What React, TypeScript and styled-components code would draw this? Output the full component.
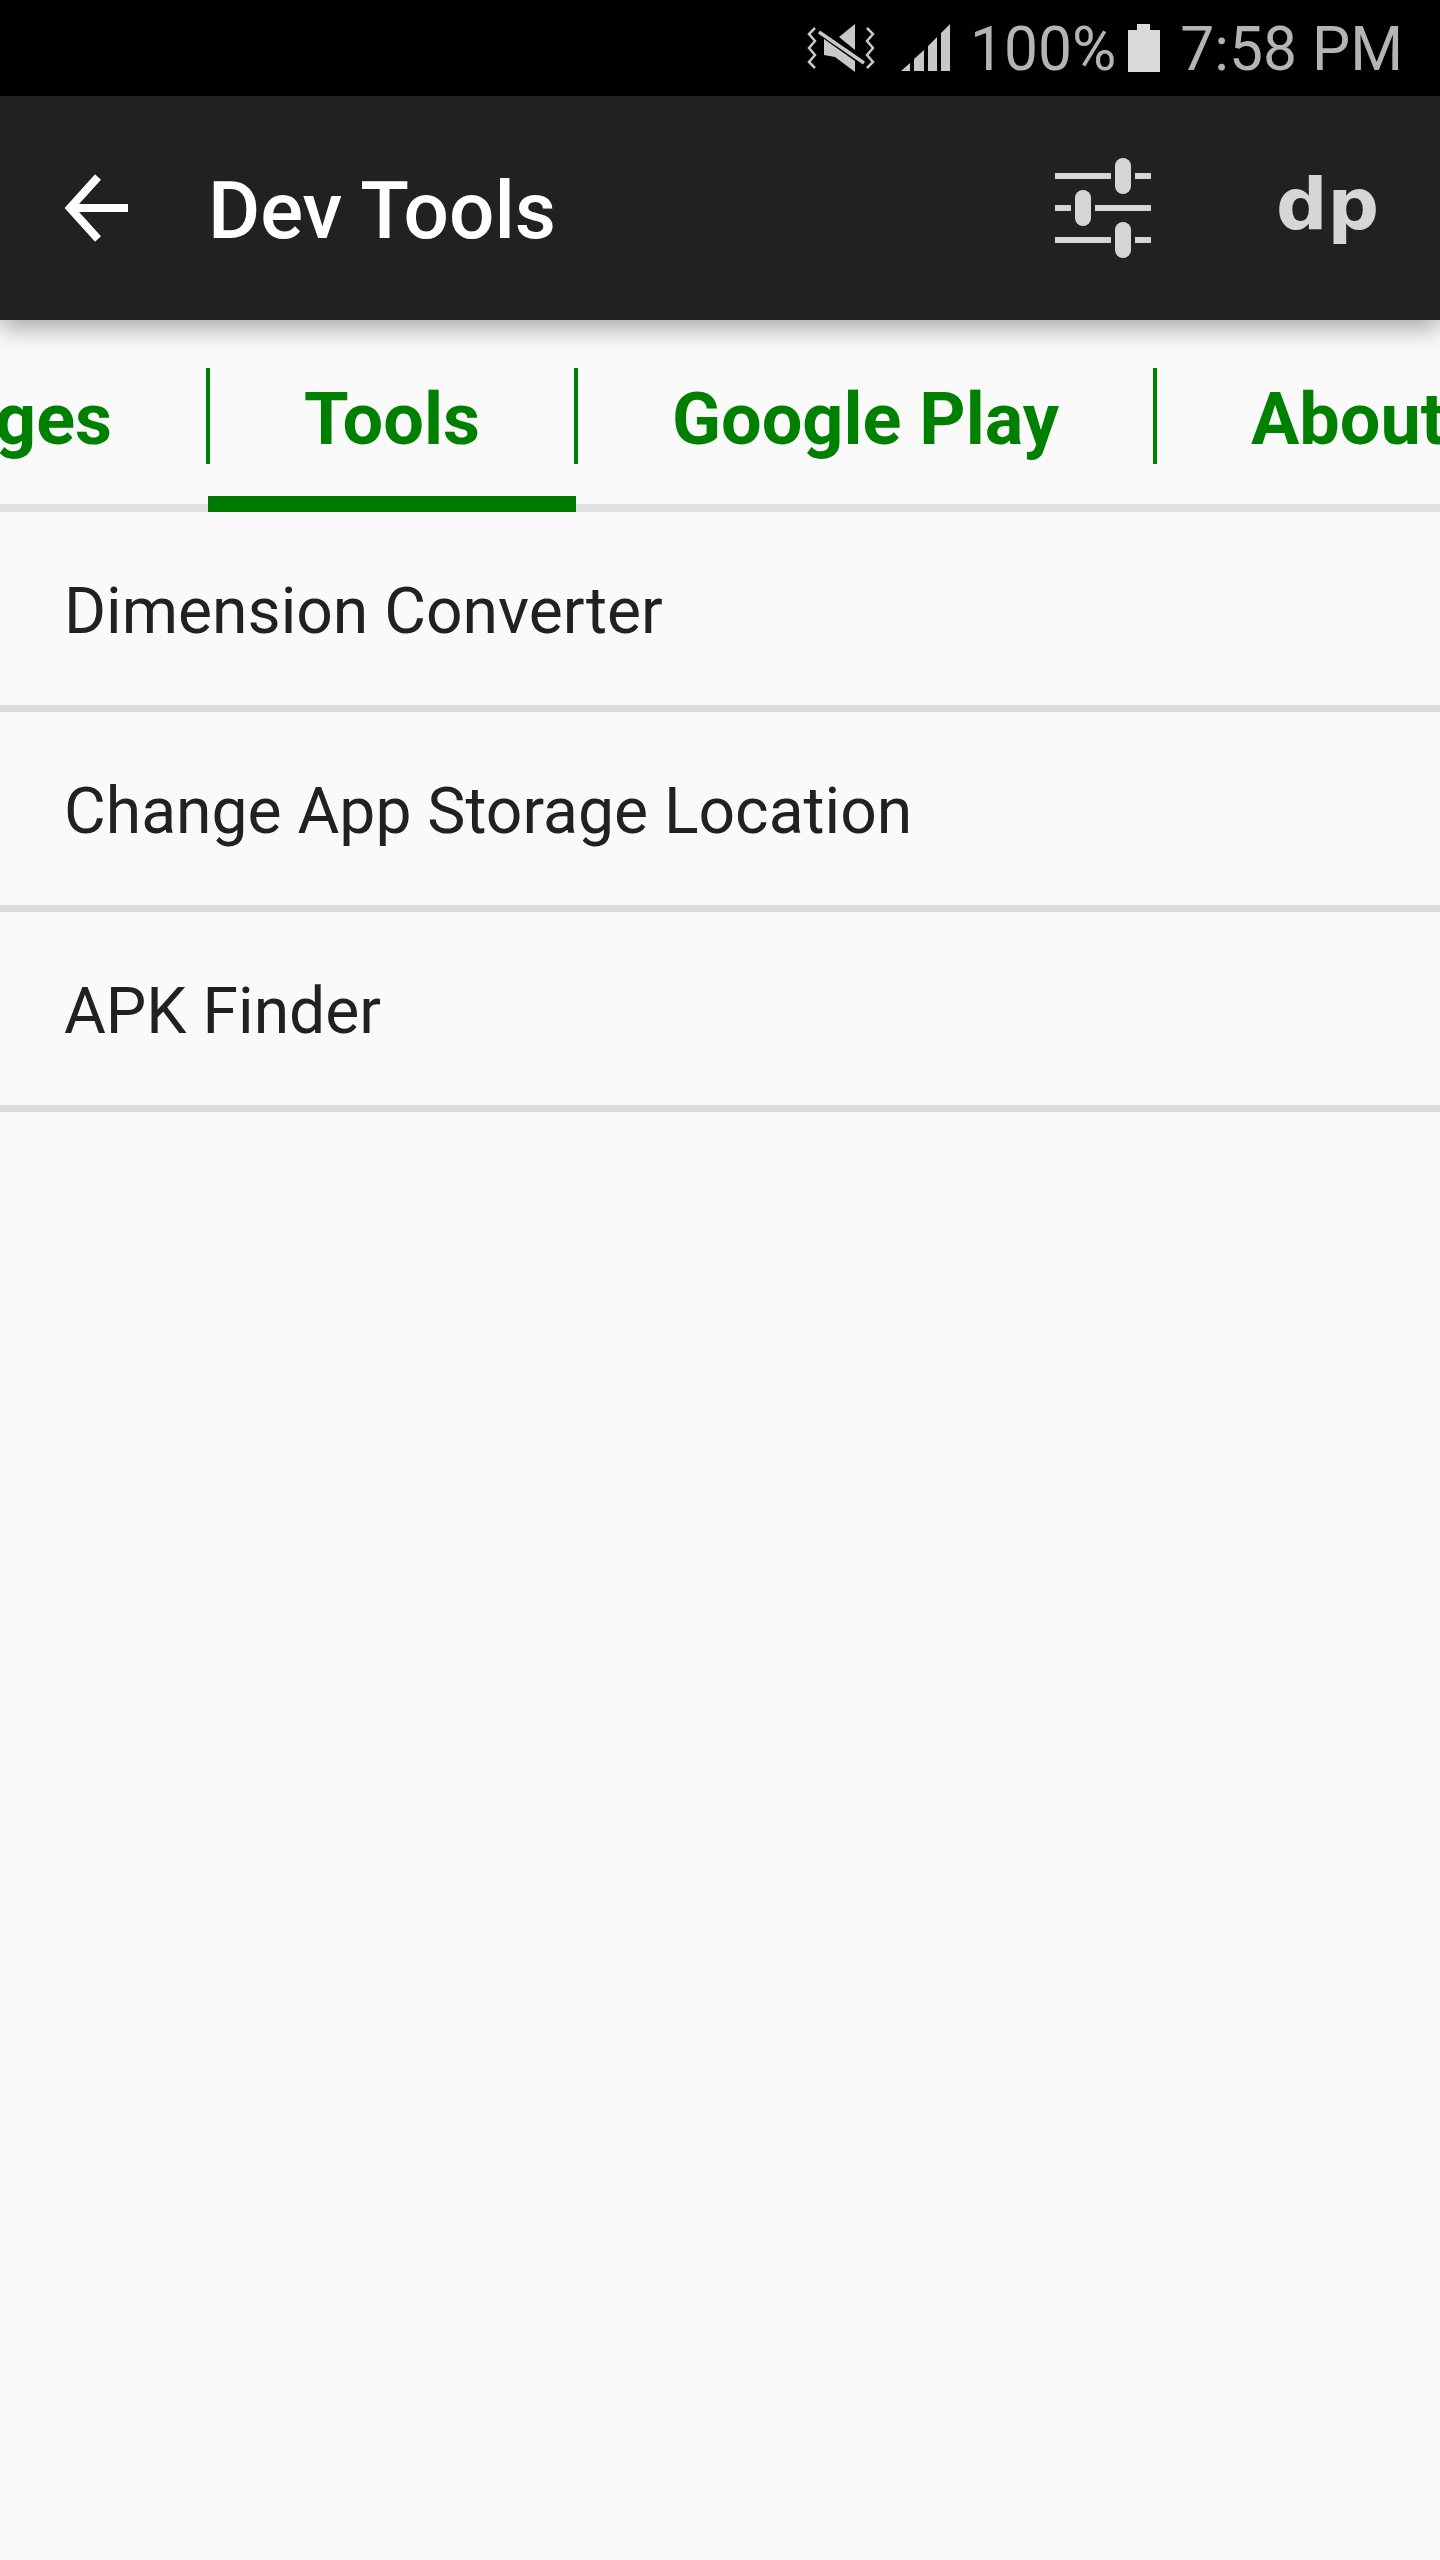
import styled, { createGlobalStyle } from 'styled-components';

const GlobalStyle = createGlobalStyle`
  html, body {
    margin: 0;
    padding: 0;
    background: #fafafa;
  }
`;

const Page = styled.div`
  width: 1440px;
  height: 2560px;
  overflow: hidden;
  background: #fafafa;
  font-family: Roboto, sans-serif;
`;

// Status bar
const StatusBar = styled.div`
  height: 96px;
  background: #000;
  display: flex;
  align-items: center;
  justify-content: flex-end;
  padding-right: 37px;
  box-sizing: border-box;
`;

const StatusText = styled.span<{ $gap: number }>`
  font-size: 60.5px;
  line-height: 96px;
  padding-top: 3px;
  color: #b4b4b4;
  margin-left: ${(p) => p.$gap}px;
`;

const StatusIcon = styled.svg<{ $gap: number }>`
  display: block;
  margin-left: ${(p) => p.$gap}px;
  fill: #c8c8c8;
`;

// Toolbar
const Toolbar = styled.div`
  position: relative;
  z-index: 2;
  height: 224px;
  background: #212121;
  display: flex;
  align-items: center;
  box-shadow: 0 8px 24px rgba(0, 0, 0, 0.34);
`;

const BackIcon = styled.svg`
  display: block;
  margin-left: 64px;
  stroke: #fff;
  stroke-width: 8;
  fill: none;
`;

const Title = styled.div`
  margin: 6px 0 0 76px;
  flex: 1;
  font-size: 80px;
  font-weight: 500;
  color: #fff;
`;

const Sliders = styled.svg`
  display: block;
  fill: #d6d6d6;
`;

const Logo = styled.div`
  margin: 0 61px 8px 125px;
  font-family: 'DejaVu Sans', sans-serif;
  font-size: 72px;
  font-weight: 700;
  color: #d6d6d6;
`;

// Tabs
const TabStrip = styled.div`
  height: 192px;
  overflow: hidden;
  box-shadow: inset 0 -8px 0 #e0e0e0;
`;

const TabRow = styled.div`
  display: flex;
  width: max-content;
  height: 192px;
  margin-left: -300px;
`;

const Tab = styled.div<{ $active?: boolean; $last?: boolean }>`
  position: relative;
  box-sizing: border-box;
  height: 192px;
  padding: 58px 96px 0;
  font-size: 72px;
  font-weight: 700;
  line-height: 84px;
  color: #008000;

  ${(p) => !p.$last && `
    &::after {
      content: '';
      position: absolute;
      right: -2px;
      top: 48px;
      width: 4px;
      height: 96px;
      background: #008000;
    }
  `}

  ${(p) => p.$active && `
    &::before {
      content: '';
      position: absolute;
      left: 0;
      right: 0;
      top: 176px;
      height: 16px;
      background: #007a00;
    }
  `}
`;

// List
const Row = styled.div`
  height: 200px;
  box-sizing: border-box;
  border-bottom: 7px solid #dcdcdc;
  padding: 4px 0 0 64px;
  display: flex;
  align-items: center;
  font-size: 64.2px;
  color: #212121;
`;

const rows = ['Dimension Converter', 'Change App Storage Location', 'APK Finder'];
const tabs = ['Packages', 'Tools', 'Google Play', 'About'];

export default function App() {
  return (
    <Page>
      <GlobalStyle />
      <StatusBar>
        <StatusIcon $gap={0} width="72" height="48" viewBox="0 0 72 48">
          <path d="M10 4 L4 10 L10 17 L4 24 L10 31 L4 38 L10 44" fill="none" stroke="#c8c8c8" strokeWidth="2.5" />
          <path d="M62 4 L68 10 L62 17 L68 24 L62 31 L68 38 L62 44" fill="none" stroke="#c8c8c8" strokeWidth="2.5" />
          <path d="M50 0 L34 13 L50 26 Z" />
          <path d="M19 15 L19 31 L30 33 L50 48 L50 37 Z" />
          <path d="M14 8 L59 39" fill="none" stroke="#c8c8c8" strokeWidth="3.5" />
        </StatusIcon>
        <StatusIcon $gap={24} width="49" height="48" viewBox="0 0 49 48">
          <path d="M0 47 L9 39 L9 47 Z M13 47 L13 35 L23 26 L23 47 Z M27 47 L27 22 L36 13 L36 47 Z M40 47 L40 9 L49 0 L49 47 Z" />
        </StatusIcon>
        <StatusText $gap={20}>100%</StatusText>
        <StatusIcon $gap={12} width="32" height="48" viewBox="0 0 32 48">
          <path d="M9 0 H22 V6 H32 V48 H0 V6 H9 Z" fill="#d9d9d9" />
        </StatusIcon>
        <StatusText $gap={20}>7:58 PM</StatusText>
      </StatusBar>

      <Toolbar>
        <BackIcon width="68" height="68" viewBox="0 0 68 68">
          <path d="M64 34 H6 M34 3 L6 34 L34 65" />
        </BackIcon>
        <Title>Dev Tools</Title>
        <Sliders width="96" height="100" viewBox="0 0 96 100">
          <rect x="0" y="15" width="56" height="6" />
          <rect x="80" y="15" width="16" height="6" />
          <rect x="60" y="0" width="16" height="36" rx="8" />
          <rect x="0" y="47" width="16" height="6" />
          <rect x="40" y="47" width="56" height="6" />
          <rect x="20" y="32" width="16" height="36" rx="8" />
          <rect x="0" y="79" width="56" height="6" />
          <rect x="80" y="79" width="16" height="6" />
          <rect x="60" y="64" width="16" height="36" rx="8" />
        </Sliders>
        <Logo>dp</Logo>
      </Toolbar>

      <TabStrip>
        <TabRow>
          {tabs.map((tab, i) => (
            <Tab key={tab} $active={tab === 'Tools'} $last={i === tabs.length - 1}>
              {tab}
            </Tab>
          ))}
        </TabRow>
      </TabStrip>

      {rows.map((row) => (
        <Row key={row}>{row}</Row>
      ))}
    </Page>
  );
}
